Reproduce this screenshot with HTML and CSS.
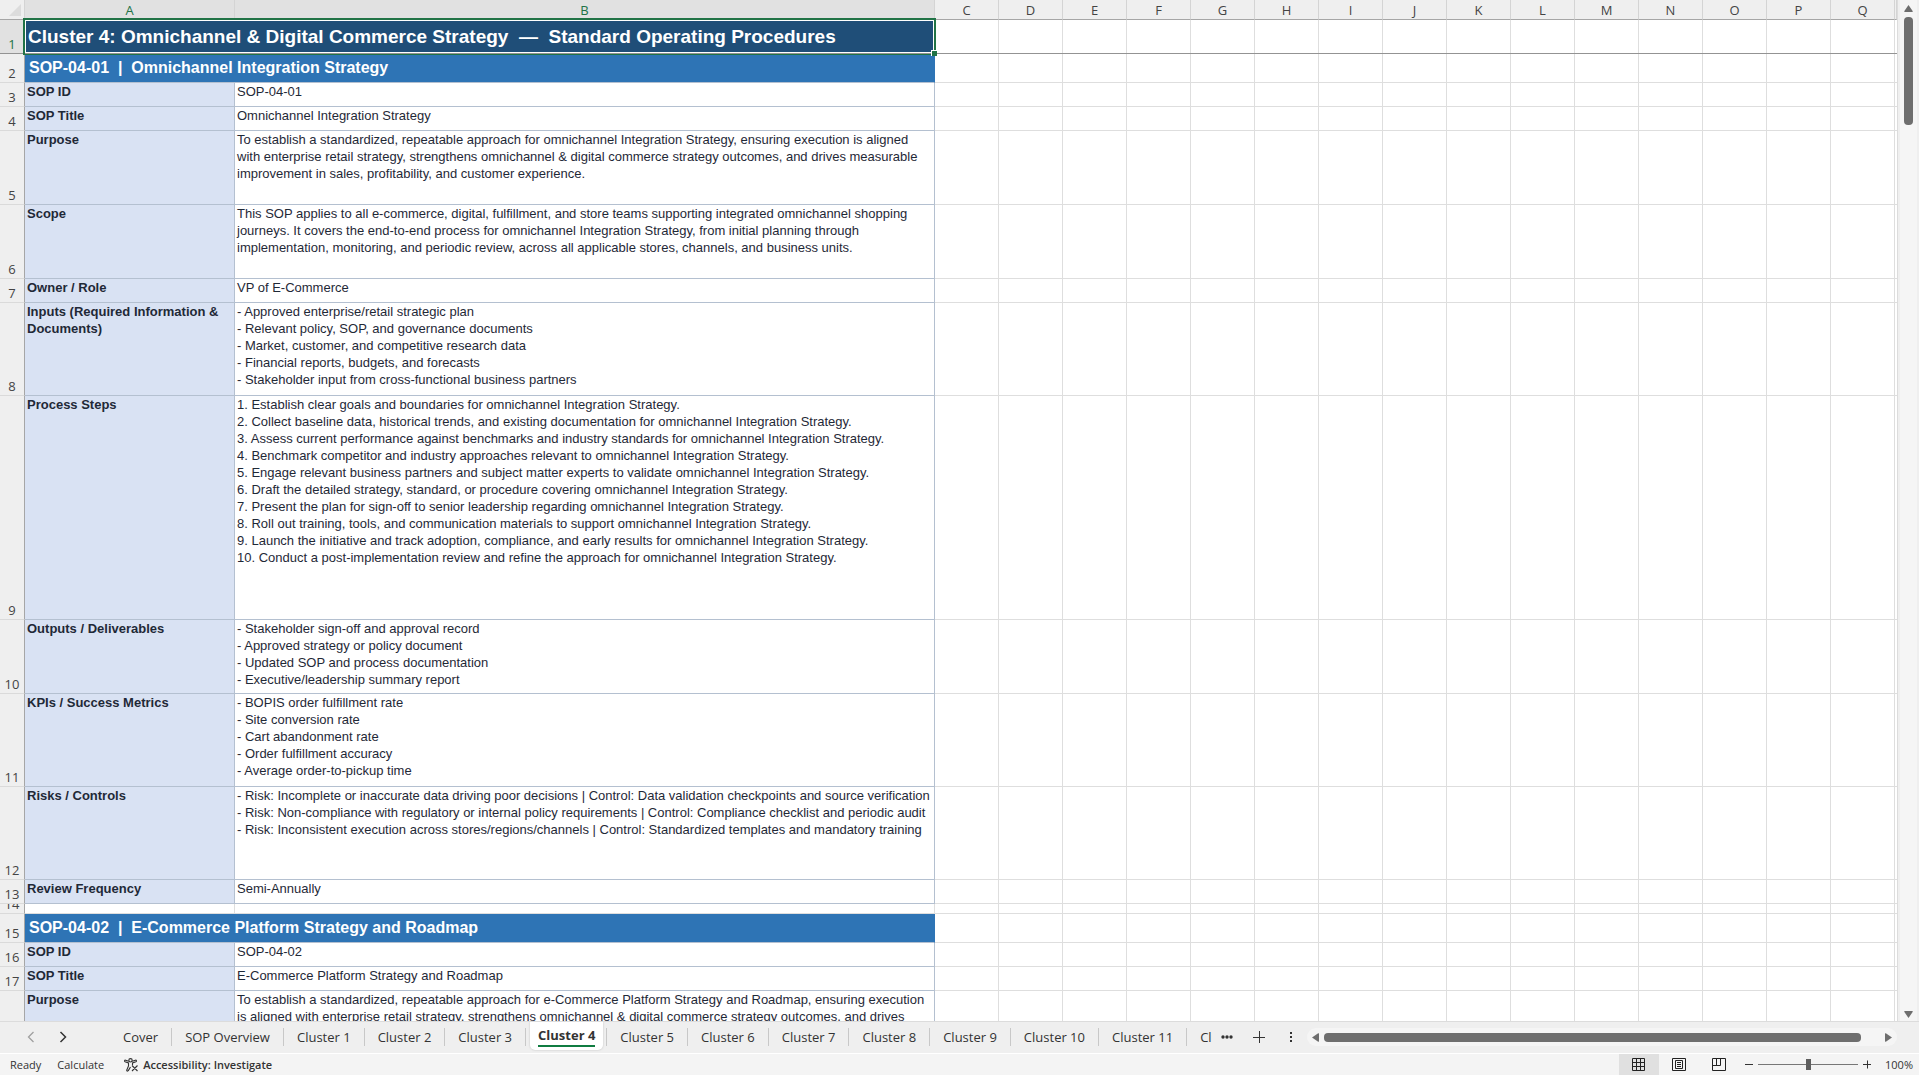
FILE: index.html
```html
<!DOCTYPE html>
<html lang="en">
<head>
    <meta charset="UTF-8">
    <meta name="viewport" content="width=device-width, initial-scale=1.0">
    <title>Cluster 4 - Standard Operating Procedures</title>
    <link rel="stylesheet" href="styles.css">
</head>
<body>
    <div class="workbook">
        <div class="sheet-area">
            <div class="sheet">
                <table class="grid">
                    <colgroup>
                        <col class="col-num">
                        <col class="col-a">
                        <col class="col-b">
                        <col span="15" class="col-std">
                        <col>
                    </colgroup>
                    <thead>
                        <tr>
                            <th class="corner"><svg width="24" height="19" viewBox="0 0 24 19"><path d="M21 4v12H9z" fill="#dcdcdc"/></svg></th>
                            <th class="selected">A</th>
                            <th class="selected">B</th>
                            <th>C</th>
                            <th>D</th>
                            <th>E</th>
                            <th>F</th>
                            <th>G</th>
                            <th>H</th>
                            <th>I</th>
                            <th>J</th>
                            <th>K</th>
                            <th>L</th>
                            <th>M</th>
                            <th>N</th>
                            <th>O</th>
                            <th>P</th>
                            <th>Q</th>
                            <th></th>
                        </tr>
                    </thead>
                    <tbody>
                        <tr class="row-title">
                            <th class="selected">1</th>
                            <td class="title" colspan="2">Cluster 4: Omnichannel &amp; Digital Commerce Strategy&nbsp; —&nbsp; Standard Operating Procedures
                                <div class="selection"><span class="fill-handle"></span></div>
                            </td>
                            <td class="blank" colspan="16"></td>
                        </tr>
                        <tr class="row-band">
                            <th>2</th>
                            <td class="band" colspan="2">SOP-04-01&nbsp; |&nbsp; Omnichannel Integration Strategy</td>
                            <td class="blank" colspan="16"></td>
                        </tr>
                        <tr class="row-single">
                            <th>3</th>
                            <td class="label">SOP ID</td>
                            <td class="value">SOP-04-01</td>
                            <td class="blank" colspan="16"></td>
                        </tr>
                        <tr class="row-single">
                            <th>4</th>
                            <td class="label">SOP Title</td>
                            <td class="value">Omnichannel Integration Strategy</td>
                            <td class="blank" colspan="16"></td>
                        </tr>
                        <tr class="row-medium">
                            <th>5</th>
                            <td class="label">Purpose</td>
                            <td class="value">To establish a standardized, repeatable approach for omnichannel Integration Strategy, ensuring execution is aligned<br>with enterprise retail strategy, strengthens omnichannel &amp; digital commerce strategy outcomes, and drives measurable<br>improvement in sales, profitability, and customer experience.</td>
                            <td class="blank" colspan="16"></td>
                        </tr>
                        <tr class="row-medium">
                            <th>6</th>
                            <td class="label">Scope</td>
                            <td class="value">This SOP applies to all e-commerce, digital, fulfillment, and store teams supporting integrated omnichannel shopping<br>journeys. It covers the end-to-end process for omnichannel Integration Strategy, from initial planning through<br>implementation, monitoring, and periodic review, across all applicable stores, channels, and business units.</td>
                            <td class="blank" colspan="16"></td>
                        </tr>
                        <tr class="row-single">
                            <th>7</th>
                            <td class="label">Owner / Role</td>
                            <td class="value">VP of E-Commerce</td>
                            <td class="blank" colspan="16"></td>
                        </tr>
                        <tr class="row-large">
                            <th>8</th>
                            <td class="label">Inputs (Required Information &amp;<br>Documents)</td>
                            <td class="value">- Approved enterprise/retail strategic plan<br>- Relevant policy, SOP, and governance documents<br>- Market, customer, and competitive research data<br>- Financial reports, budgets, and forecasts<br>- Stakeholder input from cross-functional business partners</td>
                            <td class="blank" colspan="16"></td>
                        </tr>
                        <tr class="row-steps">
                            <th>9</th>
                            <td class="label">Process Steps</td>
                            <td class="value">1. Establish clear goals and boundaries for omnichannel Integration Strategy.<br>2. Collect baseline data, historical trends, and existing documentation for omnichannel Integration Strategy.<br>3. Assess current performance against benchmarks and industry standards for omnichannel Integration Strategy.<br>4. Benchmark competitor and industry approaches relevant to omnichannel Integration Strategy.<br>5. Engage relevant business partners and subject matter experts to validate omnichannel Integration Strategy.<br>6. Draft the detailed strategy, standard, or procedure covering omnichannel Integration Strategy.<br>7. Present the plan for sign-off to senior leadership regarding omnichannel Integration Strategy.<br>8. Roll out training, tools, and communication materials to support omnichannel Integration Strategy.<br>9. Launch the initiative and track adoption, compliance, and early results for omnichannel Integration Strategy.<br>10. Conduct a post-implementation review and refine the approach for omnichannel Integration Strategy.</td>
                            <td class="blank" colspan="16"></td>
                        </tr>
                        <tr class="row-medium">
                            <th>10</th>
                            <td class="label">Outputs / Deliverables</td>
                            <td class="value">- Stakeholder sign-off and approval record<br>- Approved strategy or policy document<br>- Updated SOP and process documentation<br>- Executive/leadership summary report</td>
                            <td class="blank" colspan="16"></td>
                        </tr>
                        <tr class="row-large">
                            <th>11</th>
                            <td class="label">KPIs / Success Metrics</td>
                            <td class="value">- BOPIS order fulfillment rate<br>- Site conversion rate<br>- Cart abandonment rate<br>- Order fulfillment accuracy<br>- Average order-to-pickup time</td>
                            <td class="blank" colspan="16"></td>
                        </tr>
                        <tr class="row-large">
                            <th>12</th>
                            <td class="label">Risks / Controls</td>
                            <td class="value">- Risk: Incomplete or inaccurate data driving poor decisions | Control: Data validation checkpoints and source verification<br>- Risk: Non-compliance with regulatory or internal policy requirements | Control: Compliance checklist and periodic audit<br>- Risk: Inconsistent execution across stores/regions/channels | Control: Standardized templates and mandatory training</td>
                            <td class="blank" colspan="16"></td>
                        </tr>
                        <tr class="row-single">
                            <th>13</th>
                            <td class="label">Review Frequency</td>
                            <td class="value">Semi-Annually</td>
                            <td class="blank" colspan="16"></td>
                        </tr>
                        <tr class="row-gap">
                            <th><div class="clipped">14</div></th>
                            <td></td>
                            <td></td>
                            <td class="blank" colspan="16"></td>
                        </tr>
                        <tr class="row-band">
                            <th>15</th>
                            <td class="band" colspan="2">SOP-04-02&nbsp; |&nbsp; E-Commerce Platform Strategy and Roadmap</td>
                            <td class="blank" colspan="16"></td>
                        </tr>
                        <tr class="row-single">
                            <th>16</th>
                            <td class="label">SOP ID</td>
                            <td class="value">SOP-04-02</td>
                            <td class="blank" colspan="16"></td>
                        </tr>
                        <tr class="row-single">
                            <th>17</th>
                            <td class="label">SOP Title</td>
                            <td class="value">E-Commerce Platform Strategy and Roadmap</td>
                            <td class="blank" colspan="16"></td>
                        </tr>
                        <tr class="row-medium">
                            <th></th>
                            <td class="label">Purpose</td>
                            <td class="value">To establish a standardized, repeatable approach for e-Commerce Platform Strategy and Roadmap, ensuring execution<br>is aligned with enterprise retail strategy, strengthens omnichannel &amp; digital commerce strategy outcomes, and drives</td>
                            <td class="blank" colspan="16"></td>
                        </tr>
                    </tbody>
                </table>
            </div>
            <div class="scroll-v">
                <button class="arrow" aria-label="Scroll up"><svg width="9" height="7" viewBox="0 0 9 7"><path d="M4.500 0 9 6.500 8 7H1L0 6.500z" fill="#6e6e6e"/></svg></button>
                <div class="thumb-v"></div>
                <button class="arrow arrow-down" aria-label="Scroll down"><svg width="9" height="7" viewBox="0 0 9 7"><path d="M4.500 7 0 .5 1 0h7l1 .5z" fill="#6e6e6e"/></svg></button>
            </div>
        </div>

        <div class="tab-bar">
            <div class="tab-nav">
                <button aria-label="Previous sheet"><svg width="8" height="12" viewBox="0 0 8 12"><path d="M6.500 1 1.500 6l5 5" fill="none" stroke="#a0a0a0" stroke-width="1.300"/></svg></button>
                <button aria-label="Next sheet"><svg width="8" height="12" viewBox="0 0 8 12"><path d="m1.500 1 5 5-5 5" fill="none" stroke="#333" stroke-width="1.500"/></svg></button>
            </div>
            <div class="tabs">
                <button class="tab">Cover</button>
                <button class="tab">SOP Overview</button>
                <button class="tab">Cluster 1</button>
                <button class="tab">Cluster 2</button>
                <button class="tab">Cluster 3</button>
                <button class="tab active"><span>Cluster 4</span></button>
                <button class="tab">Cluster 5</button>
                <button class="tab">Cluster 6</button>
                <button class="tab">Cluster 7</button>
                <button class="tab">Cluster 8</button>
                <button class="tab">Cluster 9</button>
                <button class="tab">Cluster 10</button>
                <button class="tab">Cluster 11</button>
                <button class="tab">Cluster 12</button>
            </div>
            <div class="tab-tools">
                <button aria-label="More sheets"><svg width="12" height="4" viewBox="0 0 12 4"><g fill="#333"><circle cx="2" cy="2" r="1.700"/><circle cx="6" cy="2" r="1.700"/><circle cx="10" cy="2" r="1.700"/></g></svg></button>
                <button aria-label="New sheet"><svg width="12" height="12" viewBox="0 0 12 12"><path d="M0 6.500h12M6.500 0v12" stroke="#333"/></svg></button>
                <button class="resize" aria-label="Resize tab bar"><svg width="2" height="10" viewBox="0 0 2 10"><path d="M0 0h2v2H0zM0 4h2v2H0zM0 8h2v2H0z" fill="#333"/></svg></button>
            </div>
            <div class="scroll-h">
                <button class="arrow" aria-label="Scroll left"><svg width="7" height="9" viewBox="0 0 7 9"><path d="M0 4.500 6.500 0 7 1v7l-.5 1z" fill="#6e6e6e"/></svg></button>
                <div class="thumb-h"></div>
                <button class="arrow" aria-label="Scroll right"><svg width="7" height="9" viewBox="0 0 7 9"><path d="M7 4.500.5 0 0 1v7l.5 1z" fill="#6e6e6e"/></svg></button>
            </div>
        </div>

        <div class="status-bar">
            <span>Ready</span>
            <span>Calculate</span>
            <button class="accessibility">
                <svg width="15" height="14" viewBox="0 0 15 14"><g fill="none" stroke="#333" stroke-width="1.100"><circle cx="6.500" cy="2.300" r="1.700"/><path d="M4.800 3.300 1.600 2.200c-1-.3-1.500 1-.5 1.500L4.500 5v3l-1.700 4c-.3 1 1 1.500 1.500.6L6.500 9M8.200 3.300l3.200-1.100c1-.3 1.500 1 .5 1.500L8.500 5v2M8 7.500l5.500 5.500M13.500 7.500 8 13"/></g></svg>
                <span>Accessibility: Investigate</span>
            </button>
            <div class="views">
                <button class="view current" aria-label="Normal view"><svg width="14" height="13" viewBox="0 0 14 13"><path d="M.5.5h12v12H.5zM.5 4.500h12M.5 8.500h12M4.500.5v12M8.500.5v12" fill="none" stroke="#222"/></svg></button>
                <button class="view" aria-label="Page layout"><svg width="14" height="13" viewBox="0 0 14 13"><path d="M.5.5h13v12H.5zM3.500 2.500h7v8h-7zM5 4.500h4M5 6.500h4M5 8.500h4" fill="none" stroke="#222"/></svg></button>
                <button class="view" aria-label="Page break preview"><svg width="14" height="13" viewBox="0 0 14 13"><path d="M.5.5h13v12H.5zM.5 7.500h8v-7M4.500.5v7" fill="none" stroke="#222"/></svg></button>
            </div>
            <div class="zoom">
                <button aria-label="Zoom out"><svg width="8" height="9" viewBox="0 0 8 9"><path d="M0 4.500h8" stroke="#333"/></svg></button>
                <input type="range" min="0" max="100" value="50" aria-label="Zoom">
                <button aria-label="Zoom in"><svg width="8" height="9" viewBox="0 0 8 9"><path d="M0 4.500h8M4.500 .5v8" stroke="#333"/></svg></button>
                <button class="percent">100%</button>
            </div>
        </div>
    </div>
</body>
</html>
```
FILE: styles.css
```css
* {
    box-sizing: border-box;
}
body {
    margin: 0;
    font-family: "Liberation Sans", Arial, sans-serif;
    font-size: 13px;
    color: #1f2937;
}
button {
    border: none;
    background: none;
    padding: 0;
    margin: 0;
    font: inherit;
    color: inherit;
}
svg {
    display: block;
}
.workbook {
    height: 100vh;
    display: flex;
    flex-direction: column;
    overflow: hidden;
    background-color: #efefef;
}

/* Sheet */
.sheet-area {
    flex: 1;
    min-height: 0;
    display: flex;
}
.sheet {
    flex: 1;
    min-width: 0;
    overflow: hidden;
    background-color: #fff;
}
.grid {
    width: 100%;
    table-layout: fixed;
    border-collapse: separate;
    border-spacing: 0;
}
.col-num {
    width: 25px;
}
.col-a {
    width: 210px;
}
.col-b {
    width: 700px;
}
.col-std {
    width: 64px;
}
.grid th {
    padding: 0;
    font-family: "Open Sans", "Noto Sans", sans-serif;
    font-size: 13px;
    font-weight: normal;
    line-height: 17px;
    color: #444;
    background-color: #efefef;
}
.grid thead th {
    height: 20px;
    padding-top: 2px;
    border-right: 1px solid #d4d4d4;
    border-bottom: 1px solid #a6a6a6;
}
.grid tbody th {
    vertical-align: bottom;
    border-right: 1px solid #a6a6a6;
    border-bottom: 1px solid #dadada;
}
.grid thead .corner {
    padding: 0;
}
.grid .selected {
    background-color: #e1e1e1;
    color: #217346;
}
.grid td {
    padding: 0 2px;
    vertical-align: top;
    line-height: 17px;
    border-right: 1px solid #dedede;
    border-bottom: 1px solid #dedede;
    white-space: nowrap;
}
.grid .label,
.grid .value {
    border-color: #b4c0d0;
}
.grid .label {
    font-weight: bold;
    background-color: #d9e2f3;
}
.grid .band {
    padding-left: 4px;
    font-size: 16px;
    font-weight: bold;
    line-height: 28px;
    color: #fff;
    background-color: #2e74b5;
    border-right-color: #2e74b5;
    border-bottom-color: #b4c0d0;
}
.grid .title {
    position: relative;
    padding-left: 3px;
    font-size: 19px;
    font-weight: bold;
    line-height: 33px;
    color: #fff;
    background-color: #1f4e78;
}
.grid .blank {
    border-right: none;
    background-image: repeating-linear-gradient(to right, transparent 0 63px, #dedede 63px 64px);
}
.row-title {
    height: 34px;
}
.row-title th,
.row-title td {
    border-bottom-color: #939393 !important;
}
.row-band {
    height: 29px;
}
.row-single {
    height: 24px;
}
.row-medium {
    height: 74px;
}
.row-large {
    height: 93px;
}
.row-steps {
    height: 224px;
}
.row-gap {
    height: 10px;
}
.row-gap td {
    line-height: 0 !important;
}
.clipped {
    height: 9px;
    display: flex;
    align-items: flex-end;
    justify-content: center;
    overflow: hidden;
}

/* Selected range, drawn over the cell edges */
.selection {
    position: absolute;
    top: -2px;
    right: -2px;
    bottom: -2px;
    left: -2px;
    border: 2px solid #217346;
    border-bottom-width: 1px;
    box-shadow: inset 0 -1px 0 #939393, inset 0 -2px 0 #fff, inset 0 0 0 1px #fff;
}
.fill-handle {
    position: absolute;
    right: -3px;
    bottom: -2px;
    width: 6px;
    height: 6px;
    background-color: #217346;
    border-top: 1px solid #fff;
    border-left: 1px solid #fff;
}

/* Scrollbars */
.scroll-v {
    width: 22px;
    display: flex;
    flex-direction: column;
    align-items: center;
    padding: 5px 0 3px;
    border-left: 1px solid #dcdcdc;
    background: linear-gradient(#f5f5f5, #f5f5f5) center / 17px 100% no-repeat #efefef;
}
.thumb-v {
    width: 9px;
    height: 108px;
    margin-top: 5px;
    border-radius: 4px;
    background-color: #6e6e6e;
}
.arrow-down {
    margin-top: auto;
}
.scroll-h {
    width: 590px;
    height: 18px;
    margin: 6px 22px 0 0;
    padding: 0 5px;
    display: flex;
    align-items: center;
    border-radius: 9px;
    background-color: #f5f5f5;
}
.thumb-h {
    width: 537px;
    height: 9px;
    margin: 0 auto 0 5px;
    border-radius: 4px;
    background-color: #6e6e6e;
}

/* Sheet tabs */
.tab-bar {
    height: 33px;
    display: flex;
    border-top: 1px solid #dcdcdc;
    border-bottom: 1px solid #fff;
    font-family: "Open Sans", "Noto Sans", sans-serif;
    font-size: 13px;
    color: #333;
}
.tab-nav {
    display: flex;
    gap: 24px;
    width: 110px;
    height: 30px;
    padding-left: 27px;
}
.tabs {
    flex: 1;
    min-width: 0;
    display: flex;
    overflow: hidden;
}
.tab {
    position: relative;
    flex: none;
    height: 30px;
    padding: 0 14px 0 13px;
    white-space: nowrap;
}
.tab::after {
    content: "";
    position: absolute;
    top: 6px;
    right: 0;
    width: 1px;
    height: 18px;
    background-color: #c8c8c8;
}
.tab.active {
    height: 28px;
    margin: 0 4px;
    padding: 0 8px;
    border-radius: 0 0 5px 5px;
    background-color: #fff;
    box-shadow: 0 0 2px #bbb;
    font-weight: bold;
}
.tab.active::after {
    right: -4px;
}
.tab.active span {
    display: block;
    line-height: 20px;
    border-bottom: 2px solid #107c41;
}
.tab-tools {
    display: flex;
    gap: 20px;
    height: 30px;
    padding: 0 15px 0 9px;
}
.resize {
    padding-left: 5px;
}

/* Status bar */
.status-bar {
    height: 21px;
    display: flex;
    align-items: center;
    padding: 0 6px 0 10px;
    background-color: #f4f4f4;
    font-family: "Open Sans", "Noto Sans", sans-serif;
    font-size: 11px;
    color: #333;
}
.status-bar > span {
    margin-right: 16px;
}
.accessibility {
    display: flex;
    align-items: center;
    gap: 4px;
    margin-left: 4px;
    font-weight: 600;
}
.views {
    display: flex;
    height: 21px;
    margin-left: auto;
}
.view {
    width: 40px;
    display: flex;
    align-items: center;
    justify-content: center;
}
.view.current {
    background-color: #e0e0e0;
}
.zoom {
    display: flex;
    align-items: center;
    margin-left: 6px;
}
.zoom input {
    appearance: none;
    width: 100px;
    height: 11px;
    margin: 0 5px;
    background: linear-gradient(#777, #777) center / 100% 1px no-repeat;
}
.zoom input::-webkit-slider-thumb {
    appearance: none;
    width: 5px;
    height: 11px;
    background-color: #5e5e5e;
}
.percent {
    margin-left: 14px;
}
```
